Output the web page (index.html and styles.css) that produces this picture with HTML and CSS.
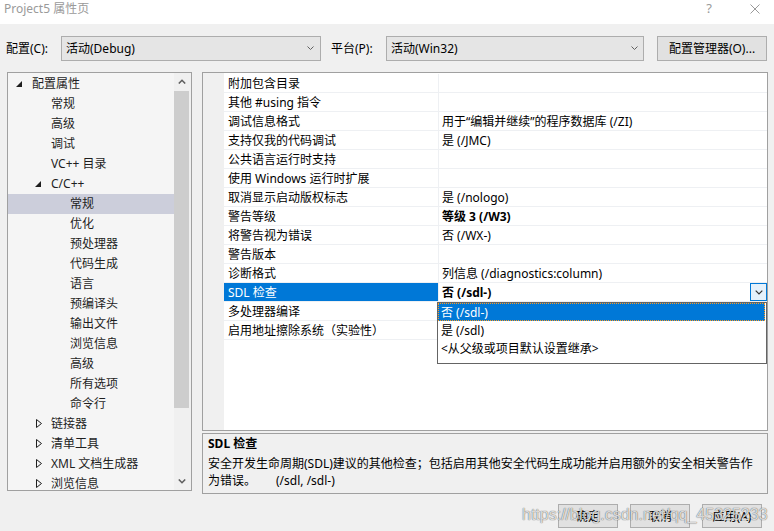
FILE: index.html
```html
<!DOCTYPE html>
<html lang="zh-CN">
<head>
    <meta charset="UTF-8">
    <meta name="viewport" content="width=device-width, initial-scale=1.0">
    <title>Project5 属性页</title>
    <link rel="stylesheet" href="styles.css">
</head>
<body>
    <div class="dialog">
        <div class="titlebar">
            <span class="title">Project5 属性页</span>
            <span class="help">?</span>
            <svg class="close" width="10" height="10" viewBox="0 0 10 10"><path d="M0.5 0.5L9.5 9.5M9.5 0.5L0.5 9.5" stroke="#9a9a9a" stroke-width="1" fill="none"/></svg>
        </div>

        <div class="config">
            <span class="label">配置(C):</span>
            <div class="combo combo-config">
                <span>活动(Debug)</span>
                <svg width="7" height="4" viewBox="0 0 7 4"><path d="M0.5 0.5L3.5 3.5L6.5 0.5" stroke="#606060" fill="none"/></svg>
            </div>
            <span class="label label-platform">平台(P):</span>
            <div class="combo combo-platform">
                <span>活动(Win32)</span>
                <svg width="7" height="4" viewBox="0 0 7 4"><path d="M0.5 0.5L3.5 3.5L6.5 0.5" stroke="#606060" fill="none"/></svg>
            </div>
            <button class="btn btn-manager">配置管理器(O)...</button>
        </div>

        <div class="main">
            <!-- category tree -->
            <div class="tree">
                <ul class="tree-list">
                    <li class="node lvl0"><span class="twisty"><svg width="6" height="6" viewBox="0 0 6 6"><path d="M6 0V6H0Z" fill="#1e1e1e"/></svg></span>配置属性</li>
                    <li class="node lvl1"><span class="twisty"></span>常规</li>
                    <li class="node lvl1"><span class="twisty"></span>高级</li>
                    <li class="node lvl1"><span class="twisty"></span>调试</li>
                    <li class="node lvl1"><span class="twisty"></span>VC++ 目录</li>
                    <li class="node lvl1"><span class="twisty"><svg width="6" height="6" viewBox="0 0 6 6"><path d="M6 0V6H0Z" fill="#1e1e1e"/></svg></span>C/C++</li>
                    <li class="node lvl2 selected"><span class="twisty"></span>常规</li>
                    <li class="node lvl2"><span class="twisty"></span>优化</li>
                    <li class="node lvl2"><span class="twisty"></span>预处理器</li>
                    <li class="node lvl2"><span class="twisty"></span>代码生成</li>
                    <li class="node lvl2"><span class="twisty"></span>语言</li>
                    <li class="node lvl2"><span class="twisty"></span>预编译头</li>
                    <li class="node lvl2"><span class="twisty"></span>输出文件</li>
                    <li class="node lvl2"><span class="twisty"></span>浏览信息</li>
                    <li class="node lvl2"><span class="twisty"></span>高级</li>
                    <li class="node lvl2"><span class="twisty"></span>所有选项</li>
                    <li class="node lvl2"><span class="twisty"></span>命令行</li>
                    <li class="node lvl1"><span class="twisty closed"><svg width="6" height="9" viewBox="0 0 6 9"><path d="M0.5 0.5L5.5 4.5L0.5 8.5Z" fill="none" stroke="#1e1e1e"/></svg></span>链接器</li>
                    <li class="node lvl1"><span class="twisty closed"><svg width="6" height="9" viewBox="0 0 6 9"><path d="M0.5 0.5L5.5 4.5L0.5 8.5Z" fill="none" stroke="#1e1e1e"/></svg></span>清单工具</li>
                    <li class="node lvl1"><span class="twisty closed"><svg width="6" height="9" viewBox="0 0 6 9"><path d="M0.5 0.5L5.5 4.5L0.5 8.5Z" fill="none" stroke="#1e1e1e"/></svg></span>XML 文档生成器</li>
                    <li class="node lvl1"><span class="twisty closed"><svg width="6" height="9" viewBox="0 0 6 9"><path d="M0.5 0.5L5.5 4.5L0.5 8.5Z" fill="none" stroke="#1e1e1e"/></svg></span>浏览信息</li>
                </ul>
                <div class="scrollbar">
                    <div class="sb-btn"><svg width="8" height="5" viewBox="0 0 8 5"><path d="M0.8 4.5L4 1.3L7.2 4.5" stroke="#606060" stroke-width="1.6" fill="none"/></svg></div>
                    <div class="sb-track"><div class="sb-thumb"></div></div>
                    <div class="sb-btn"><svg width="8" height="5" viewBox="0 0 8 5"><path d="M0.8 0.5L4 3.7L7.2 0.5" stroke="#606060" stroke-width="1.6" fill="none"/></svg></div>
                </div>
            </div>

            <div class="right">
                <!-- property grid -->
                <div class="grid">
                    <div class="gutter"></div>
                    <div class="rows">
                        <div class="row"><div class="name">附加包含目录</div><div class="value"></div></div>
                        <div class="row"><div class="name">其他 #using 指令</div><div class="value"></div></div>
                        <div class="row"><div class="name">调试信息格式</div><div class="value">用于“编辑并继续”的程序数据库 (/ZI)</div></div>
                        <div class="row"><div class="name">支持仅我的代码调试</div><div class="value">是 (/JMC)</div></div>
                        <div class="row"><div class="name">公共语言运行时支持</div><div class="value"></div></div>
                        <div class="row"><div class="name">使用 Windows 运行时扩展</div><div class="value"></div></div>
                        <div class="row"><div class="name">取消显示启动版权标志</div><div class="value">是 (/nologo)</div></div>
                        <div class="row"><div class="name">警告等级</div><div class="value bold">等级 3 (/W3)</div></div>
                        <div class="row"><div class="name">将警告视为错误</div><div class="value">否 (/WX-)</div></div>
                        <div class="row"><div class="name">警告版本</div><div class="value"></div></div>
                        <div class="row"><div class="name">诊断格式</div><div class="value">列信息 (/diagnostics:column)</div></div>
                        <div class="row active">
                            <div class="name">SDL 检查</div>
                            <div class="value bold">否 (/sdl-)
                                <span class="drop-btn"><svg width="8" height="5" viewBox="0 0 8 5"><path d="M0.7 0.7L4 4L7.3 0.7" stroke="#333" stroke-width="1.2" fill="none"/></svg></span>
                            </div>
                        </div>
                        <div class="row"><div class="name">多处理器编译</div><div class="value"></div></div>
                        <div class="row"><div class="name">启用地址擦除系统（实验性）</div><div class="value"></div></div>
                    </div>

                    <ul class="dropdown">
                        <li class="option current">否 (/sdl-)</li>
                        <li class="option">是 (/sdl)</li>
                        <li class="option">&lt;从父级或项目默认设置继承&gt;</li>
                    </ul>
                </div>

                <div class="desc">
                    <div class="desc-title">SDL 检查</div>
                    <div class="desc-text">安全开发生命周期(SDL)建议的其他检查；包括启用其他安全代码生成功能并启用额外的安全相关警告作<br>为错误。<span class="switches">(/sdl, /sdl-)</span></div>
                </div>
            </div>
        </div>

        <div class="footer">
            <button class="btn btn-dialog">确定</button>
            <button class="btn btn-dialog">取消</button>
            <button class="btn btn-dialog">应用(A)</button>
        </div>

        <div class="watermark">https://blog.csdn.net/qq_45325233</div>
    </div>
</body>
</html>
```

FILE: styles.css
```css
* {
    box-sizing: border-box;
}
body {
    margin: 0;
    width: 774px;
    height: 531px;
    overflow: hidden;
    background: #f0f0f0;
    font-family: "Noto Sans", "Noto Sans CJK SC", sans-serif;
    font-size: 12px;
    color: #000;
}
.dialog {
    position: relative;
    height: 531px;
}

/* title bar */
.titlebar {
    height: 24px;
    background: #fff;
    display: flex;
    align-items: flex-start;
}
.title {
    margin-left: 4px;
    line-height: 17px;
    color: #9a9a9a;
}
.help {
    margin-left: auto;
    line-height: 17px;
    font-size: 13px;
    color: #9a9a9a;
}
.close {
    margin: 4px 14px 0 38px;
}

/* configuration row */
.config {
    display: flex;
    align-items: center;
    height: 26px;
    margin-top: 11px;
}
.label {
    width: 55px;
    margin-left: 6px;
    white-space: nowrap;
}
.label-platform {
    margin-left: 10px;
}
.combo {
    height: 25px;
    display: flex;
    align-items: center;
    justify-content: space-between;
    padding: 0 6px 0 4px;
    background: #e5e5e5;
    border: 1px solid #adadad;
}
.combo-config {
    width: 260px;
}
.combo-platform {
    width: 258px;
    padding-right: 5px;
}
.btn {
    font-family: inherit;
    font-size: 12px;
    color: #000;
    background: #e1e1e1;
    border: 1px solid #adadad;
    padding: 0;
}
.btn-manager {
    width: 110px;
    height: 25px;
    margin-left: 13px;
}

/* main area */
.main {
    display: flex;
    gap: 10px;
    margin-top: 11px;
    padding-left: 7px;
    height: 422px;
}
.tree {
    width: 185px;
    height: 419px;
    display: flex;
    background: #f5f5f5;
    border: 1px solid #a0a0a0;
}
.tree-list {
    list-style: none;
    margin: 0;
    padding: 1px 0 0;
    width: 166px;
    overflow: hidden;
}
.node {
    height: 20px;
    line-height: 20px;
    display: flex;
    align-items: center;
    white-space: nowrap;
    color: #1e1e1e;
}
.lvl0 { padding-left: 4px; }
.lvl1 { padding-left: 23px; }
.lvl2 { padding-left: 42px; }
.node.selected {
    background: #cccedb;
}
.twisty {
    width: 20px;
    display: flex;
    align-items: center;
    padding-left: 4px;
    padding-bottom: 1px;
}
.twisty.closed {
    padding-left: 5px;
}
.scrollbar {
    width: 17px;
    display: flex;
    flex-direction: column;
    background: #f0f0f0;
}
.sb-btn {
    height: 17px;
    display: flex;
    align-items: center;
    justify-content: center;
    padding-right: 2px;
}
.sb-track {
    flex: 1;
    padding-top: 1px;
}
.sb-thumb {
    height: 317px;
    margin-right: 2px;
    background: #cdcdcd;
}

.right {
    width: 566px;
    display: flex;
    flex-direction: column;
    gap: 2px;
}

/* property grid */
.grid {
    position: relative;
    height: 359px;
    display: flex;
    background: #fff;
    border: 1px solid #a0a0a0;
}
.gutter {
    width: 21px;
    background: #f0f0f0;
}
.rows {
    flex: 1;
    padding-top: 1px;
}
.row {
    display: flex;
    height: 19px;
    border-bottom: 1px solid #eef0f3;
    line-height: 19px;
    white-space: nowrap;
}
.name {
    width: 215px;
    padding-left: 4px;
    border-right: 1px solid #eef0f3;
}
.value {
    flex: 1;
    display: flex;
    padding-left: 3px;
}
.bold {
    font-weight: bold;
}
.row.active .name {
    background: #0078d7;
    color: #fff;
}
.drop-btn {
    margin-left: auto;
    width: 17px;
    height: 18px;
    display: flex;
    align-items: center;
    justify-content: center;
    background: #e5f1fb;
    border: 1px solid #0078d7;
}
.dropdown {
    position: absolute;
    left: 234px;
    top: 229px;
    width: 330px;
    height: 62px;
    margin: 0;
    padding: 0;
    list-style: none;
    background: #fff;
    border: 1px solid #646464;
}
.option {
    height: 18px;
    line-height: 19px;
    padding-left: 3px;
    white-space: nowrap;
}
.option.current {
    margin-right: 1px;
    padding-left: 2px;
    line-height: 17px;
    background: #0078d7;
    color: #fff;
    border: 1px dotted #ff9a1f;
}

/* description */
.desc {
    height: 61px;
    padding: 1px 5px 0;
    border: 1px solid #a0a0a0;
    white-space: nowrap;
}
.desc-title {
    font-weight: bold;
    line-height: 18px;
    margin-bottom: 2px;
}
.desc-text {
    line-height: 17px;
}
.switches {
    margin-left: 20px;
}

/* dialog buttons */
.footer {
    display: flex;
    justify-content: flex-end;
    gap: 12px;
    margin-top: 10px;
    padding-right: 12px;
}
.btn-dialog {
    width: 60px;
    height: 24px;
}

.watermark {
    position: absolute;
    left: 522px;
    top: 506px;
    font-family: "Liberation Sans", sans-serif;
    font-size: 16px;
    line-height: 18px;
    color: rgba(255, 255, 255, 0.8);
    text-shadow: 0 0 1px rgba(0, 0, 0, 0.6), 0 0 1px rgba(0, 0, 0, 0.3);
    pointer-events: none;
}
```
